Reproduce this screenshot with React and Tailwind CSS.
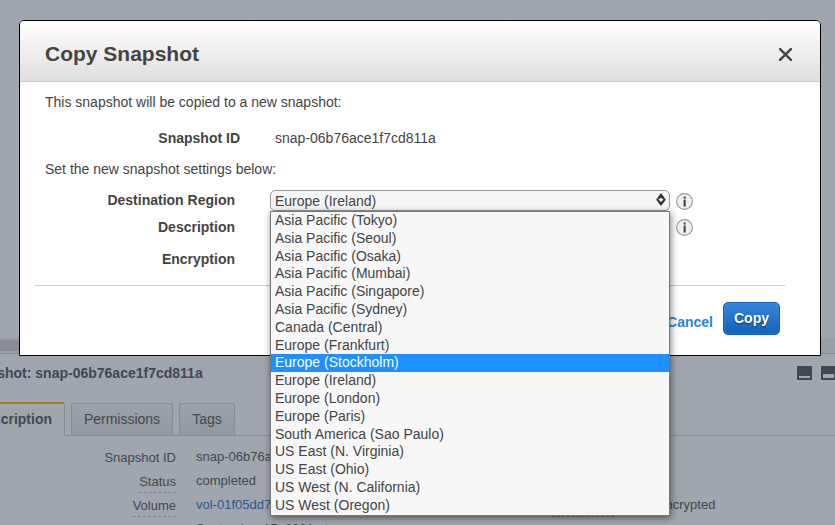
const regions = [
  "Asia Pacific (Tokyo)",
  "Asia Pacific (Seoul)",
  "Asia Pacific (Osaka)",
  "Asia Pacific (Mumbai)",
  "Asia Pacific (Singapore)",
  "Asia Pacific (Sydney)",
  "Canada (Central)",
  "Europe (Frankfurt)",
  "Europe (Stockholm)",
  "Europe (Ireland)",
  "Europe (London)",
  "Europe (Paris)",
  "South America (Sao Paulo)",
  "US East (N. Virginia)",
  "US East (Ohio)",
  "US West (N. California)",
  "US West (Oregon)",
];

function InfoIcon() {
  return (
    <svg className="size-[17px] shrink-0" viewBox="0 0 17 17">
      <circle cx="8.5" cy="8.5" r="7.9" fill="#efefef" stroke="#999" strokeWidth="1.1" />
      <rect x="7.6" y="3.6" width="2.1" height="2" fill="#444" />
      <rect x="7.6" y="6.6" width="2.1" height="7" fill="#444" />
    </svg>
  );
}

function Detail({ label, value, link, dashed }) {
  return (
    <div className="flex h-6 items-start">
      <div className="flex w-[176px] justify-end">
        <span className={`h-[21px] leading-[16px] pt-[2px] ${dashed ? "border-b border-dashed border-[#80868d]" : ""}`}>{label}</span>
      </div>
      <span className={`ml-5 leading-[16px] pt-px ${link ? "text-[#28598c]" : ""}`}>{value}</span>
    </div>
  );
}

function DetailsPage() {
  return (
    <div className="flex h-full flex-col text-[#42484f]">
      <div className="h-[338px] shrink-0" />
      <div className="flex h-[16px] shrink-0 flex-col border-b border-[#868c93] bg-[#999fa6]">
        <div className="mt-[2px] h-[11px] w-[300px] bg-[#888e94]" />
        <div className="h-[2px] bg-[#9ca2a8]" />
      </div>
      <div className="flex h-[48px] shrink-0 items-start justify-between pt-[11px]">
        <div className="-ml-[37px] whitespace-nowrap text-[14px] font-bold leading-[16px]">Snapshot: snap-06b76ace1f7cd811a</div>
        <svg className="mt-px h-[14px] w-[38px] shrink-0" viewBox="0 0 38 14">
          <path d="M0 0h15v14H0zM24 0h15v14H24z" fill="#42484f" />
          <path d="M2 10h11v2H2zM26 8h11v4H26z" fill="#a0a6ad" />
        </svg>
      </div>
      <div className="flex h-[34px] shrink-0 items-end border-b border-[#868c93] text-[14px]">
        <div className="-mb-px flex h-[34px] w-[65px] items-center justify-end rounded-tr-[3px] border-r border-t-2 border-r-[#868c93] border-t-[#a87723] bg-[#a0a6ad] pb-[2px] pr-[12px] font-bold">Description</div>
        <div className="ml-[6px] flex h-[32px] w-[102px] items-center justify-center rounded-t-[3px] border border-b-0 border-[#868c93] bg-gradient-to-b from-[#9ca2a9] to-[#91979e]">Permissions</div>
        <div className="ml-[6px] flex h-[32px] w-[56px] items-center justify-center rounded-t-[3px] border border-b-0 border-[#868c93] bg-gradient-to-b from-[#9ca2a9] to-[#91979e]">Tags</div>
      </div>
      <div className="flex min-h-0 flex-1 overflow-hidden pt-[12px] text-[13px]">
        <div className="w-[552px] shrink-0">
          <Detail label="Snapshot ID" value="snap-06b76ace1f7cd811a" />
          <Detail label="Status" value="completed" dashed />
          <Detail label="Volume" value="vol-01f05dd7" link dashed />
          <Detail label="" value="September 15, 2021 at" />
        </div>
        <div className="flex h-[20px] items-start pt-[48px]">
          <span className="h-[21px] w-[62px] shrink-0 border-b border-dashed border-[#747a80] pt-[2px] leading-[16px]">Encryption</span>
          <span className="ml-[19px] w-[82px] whitespace-nowrap text-right leading-[17px]">Not Encrypted</span>
        </div>
      </div>
    </div>
  );
}

function RegionMenu() {
  return (
    <div className="absolute left-[-1px] top-[20px] z-10 h-[305px] w-[400px] border border-[#777] bg-[#f7f7f7] shadow-[1px_2px_7px_rgba(0,0,0,0.5)]">
      <div className="-mt-[0.4px]">
        {regions.map((name) => (
          <div key={name} className={`h-[17.8px] pl-1 pt-[0.4px] leading-[16px] ${name === "Europe (Stockholm)" ? "bg-[#1e90ff] text-white" : ""}`}>
            {name}
          </div>
        ))}
      </div>
    </div>
  );
}

function CopyDialog() {
  return (
    <div className="absolute left-[19px] top-[20px] flex h-[336px] w-[802px] flex-col rounded-t-[5px] border border-black bg-white text-[14px] text-[#444]">
      <div className="flex h-[61px] shrink-0 items-center justify-between rounded-t-[4px] border-b border-[#ccc] bg-gradient-to-b from-white to-[#dfdfdf] pl-[25px] pr-[28px] pt-[5px]">
        <h1 className="text-[21px] font-bold leading-[24px]">Copy Snapshot</h1>
        <svg className="mt-[2px] size-[13px]" viewBox="0 0 13 13">
          <path d="M.2.2l12.6 12.6M12.8.2L.2 12.8" stroke="#444" strokeWidth="2.4" />
        </svg>
      </div>
      <p className="mt-[12px] pl-[25px] leading-[16px]">This snapshot will be copied to a new snapshot:</p>
      <div className="mt-[20px] flex leading-[16px]">
        <span className="w-[220px] text-right font-bold">Snapshot ID</span>
        <span className="ml-[35px]">snap-06b76ace1f7cd811a</span>
      </div>
      <p className="mt-[15px] pl-[25px] leading-[16px]">Set the new snapshot settings below:</p>
      <div className="mt-[13px] flex h-[21px]">
        <span className="w-[215px] pt-[2px] text-right font-bold leading-[16px]">Destination Region</span>
        <div className="relative ml-[35px] flex w-[400px] items-center justify-between rounded-[5px] border border-[#999] bg-[#f6f6f6] pl-1 pr-[3px]">
          <span className="pt-px">Europe (Ireland)</span>
          <svg className="mb-[2px] h-[13px] w-[10px]" viewBox="0 0 10 13">
            <path d="M5 0l3.2 4.2L9.8 6.8 5 13 .2 6.8l1.6-2.6z" fill="#333" />
            <path d="M5 4.7l2.5 1.8L5 9 2.5 6.5z" fill="#eee" />
            <path d="M.2 5.5h1.6M8.2 5.5h1.6" stroke="#aaa" strokeWidth=".8" />
          </svg>
          <RegionMenu />
        </div>
        <div className="ml-[6px] pt-[3px]"><InfoIcon /></div>
      </div>
      <div className="mt-[7px] flex h-[20px]">
        <span className="w-[215px] pt-px text-right font-bold leading-[16px]">Description</span>
        <div className="ml-[35px] h-[20px] w-[400px] rounded border border-[#aaa]" />
        <div className="ml-[6px] pt-px"><InfoIcon /></div>
      </div>
      <div className="mt-[13px] flex leading-[16px]">
        <span className="w-[215px] text-right font-bold">Encryption</span>
      </div>
      <div className="ml-[15px] mr-[35px] mt-[18px] border-t border-[#ccc]" />
      <div className="mt-[16px] flex h-[33px] justify-end pr-[40px] font-bold">
        <button className="pt-[6px] leading-[16px] text-[#2e83dc]">Cancel</button>
        <button className="ml-[10px] w-[57px] rounded-[5px] border border-[#125aac] bg-gradient-to-b from-[#3285dc] to-[#1463b9] pb-px text-white shadow-[inset_0_0_0_1px_rgba(80,155,230,0.3)] [text-shadow:0_1px_2px_rgba(0,0,0,0.5)]">Copy</button>
      </div>
    </div>
  );
}

export default function App() {
  return (
    <main className="relative h-[525px] w-[835px] overflow-hidden bg-[#a0a6ad] font-['Liberation_Sans',Arial,sans-serif]">
      <DetailsPage />
      <CopyDialog />
    </main>
  );
}
